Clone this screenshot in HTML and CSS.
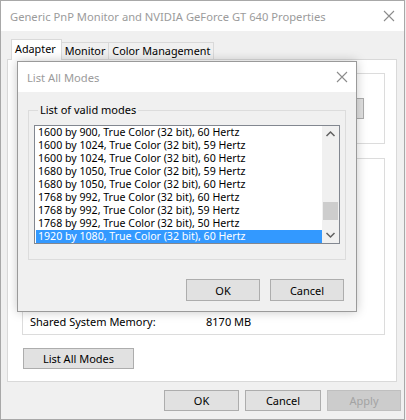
FILE: index.html
```html
<!DOCTYPE html>
<html>
<head>
<meta charset="utf-8">
<link rel="stylesheet" href="styles.css">
</head>
<body>
<div class="window">
  <div class="titlebar">
    <span class="title">Generic PnP Monitor and NVIDIA GeForce GT 640 Properties</span>
    <svg class="close" width="12" height="12" viewBox="0 0 12 12"><path d="M1 1L11 11M11 1L1 11" stroke="#8c8c8c" stroke-width="1.1" fill="none"/></svg>
  </div>
  <div class="body">
    <div class="tabs">
      <div class="tab active">Adapter</div>
      <div class="tab">Monitor</div>
      <div class="tab">Color Management</div>
    </div>
    <div class="panel">
      <div class="group g1">
        <div class="btn ghost">Properties</div>
      </div>
      <div class="group g2">
        <div class="info-row"><span class="lbl">Shared System Memory:</span><span class="val">8170 MB</span></div>
      </div>
      <div class="btn listbtn">List All Modes</div>
    </div>
    <div class="footer">
      <div class="btn">OK</div>
      <div class="btn">Cancel</div>
      <div class="btn disabled">Apply</div>
    </div>
  </div>

  <div class="dialog">
    <div class="d-title">
      <span class="title">List All Modes</span>
      <svg class="close" width="12" height="12" viewBox="0 0 12 12"><path d="M1 1L11 11M11 1L1 11" stroke="#8c8c8c" stroke-width="1.1" fill="none"/></svg>
    </div>
    <div class="d-body">
      <fieldset class="d-group">
        <legend>List of valid modes</legend>
        <div class="listbox">
          <div class="rows">
            <div class="row">1600 by 900, True Color (32 bit), 60 Hertz</div>
            <div class="row">1600 by 1024, True Color (32 bit), 59 Hertz</div>
            <div class="row">1600 by 1024, True Color (32 bit), 60 Hertz</div>
            <div class="row">1680 by 1050, True Color (32 bit), 59 Hertz</div>
            <div class="row">1680 by 1050, True Color (32 bit), 60 Hertz</div>
            <div class="row">1768 by 992, True Color (32 bit), 60 Hertz</div>
            <div class="row">1768 by 992, True Color (32 bit), 59 Hertz</div>
            <div class="row">1768 by 992, True Color (32 bit), 50 Hertz</div>
            <div class="row sel">1920 by 1080, True Color (32 bit), 60 Hertz</div>
          </div>
          <div class="scrollbar">
            <svg class="arrow" width="17" height="17" viewBox="0 0 17 17"><path d="M4.5 10L8.5 6L12.5 10" stroke="#606060" stroke-width="1.5" fill="none"/></svg>
            <div class="track"><div class="thumb"></div></div>
            <svg class="arrow" width="17" height="17" viewBox="0 0 17 17"><path d="M4.5 7L8.5 11L12.5 7" stroke="#606060" stroke-width="1.5" fill="none"/></svg>
          </div>
        </div>
      </fieldset>
      <div class="d-buttons">
        <div class="btn">OK</div>
        <div class="btn">Cancel</div>
      </div>
    </div>
  </div>
</div>
</body>
</html>
```

FILE: styles.css
```css
* { box-sizing: border-box; }
html, body { margin: 0; padding: 0; }
body {
  width: 406px;
  height: 420px;
  overflow: hidden;
  font-family: "Noto Sans", "DejaVu Sans", sans-serif;
  font-size: 11px;
  color: #000;
  background: #f0f0f0;
}
.window {
  position: relative;
  width: 405px;
  height: 420px;
  border: 1px solid #a8a8a8;
  background: #f0f0f0;
  display: flex;
  flex-direction: column;
}
.titlebar {
  height: 30px;
  background: #fff;
  display: flex;
  align-items: center;
  justify-content: space-between;
  padding: 0 9px 0 9px;
  flex: none;
}
.title {
  color: #9b9b9b;
  font-size: 11.2px;
}
.close { display: block; }
.body {
  flex: 1;
  display: flex;
  flex-direction: column;
  padding: 8px 7px 0 6px;
}
.tabs {
  display: flex;
  align-items: flex-end;
  height: 20px;
  padding-left: 4px;
  position: relative;
  z-index: 1;
}
.tab {
  height: 17px;
  padding: 0 3px 0 3px;
  line-height: 16px;
  font-size: 10.8px;
  border: 1px solid #d9d9d9;
  border-bottom: none;
  border-left: none;
  background: #f0f0f0;
}
.tab.active {
  height: 21px;
  margin-bottom: -1px;
  background: #fff;
  border-left: 1px solid #d9d9d9;
  padding: 0 5px 0 3px;
  line-height: 17px;
}
.panel {
  height: 323px;
  background: #fff;
  border: 1px solid #d9d9d9;
  padding: 13px 11px 0 14px;
  display: flex;
  flex-direction: column;
}
.group {
  border: 1px solid #dcdcdc;
  flex: none;
}
.g1 { height: 71px; display: flex; align-items: center; justify-content: flex-end; padding-right: 20px; }
.g2 { height: 177px; margin-top: 14px; display: flex; flex-direction: column; justify-content: flex-end; padding: 0 0 6px 7px; }
.info-row { display: flex; height: 14px; align-items: center; }
.lbl { width: 176px; }
.btn {
  height: 22px;
  border: 1px solid #adadad;
  background: #e1e1e1;
  display: flex;
  align-items: center;
  justify-content: center;
  flex: none;
}
.ghost { width: 80px; height: 21px; }
.listbtn { width: 111px; height: 21px; margin-top: 13px; margin-left: 1px; }
.footer {
  display: flex;
  justify-content: flex-end;
  gap: 6px;
  padding-top: 8px;
  margin-right: -4px;
}
.footer .btn { width: 75px; height: 21px; }
.footer .btn:nth-child(2) { width: 76px; }
.footer .disabled { width: 74px; color: #a3a3a3; background: #cccccc; border-color: #bfbfbf; }

/* dialog */
.dialog {
  position: absolute;
  left: 16px;
  top: 60px;
  width: 340px;
  height: 251px;
  border: 1px solid #9a9a9a;
  background: #f0f0f0;
  box-shadow: 0 0 10px rgba(0,0,0,0.22);
  display: flex;
  flex-direction: column;
  z-index: 5;
}
.d-title {
  height: 30px;
  background: #fff;
  display: flex;
  align-items: center;
  justify-content: space-between;
  padding: 0 8px 0 9px;
  flex: none;
}
.d-body {
  flex: 1;
  padding: 12px 10px 0 10px;
  display: flex;
  flex-direction: column;
}
.d-group {
  margin: 0;
  border: 1px solid #dcdcdc;
  padding: 9px 5px 15px 5px;
  height: 156px;
  min-width: 0;
}
.d-group legend {
  padding: 0 2px;
  margin-left: 4px;
  line-height: 12px;
}
.listbox {
  height: 119px;
  border: 1px solid #828790;
  background: #fff;
  display: flex;
  padding: 0 0 0 1px;
}
.rows { flex: 1; display: flex; flex-direction: column; }
.row {
  height: 13px;
  line-height: 13px;
  font-size: 10.6px;
  padding-left: 2px;
  white-space: nowrap;
  overflow: hidden;
}
.row.sel { background: #3399ff; color: #fff; }
.scrollbar {
  width: 17px;
  background: #f0f0f0;
  display: flex;
  flex-direction: column;
}
.arrow { display: block; flex: none; }
.track { flex: 1; position: relative; }
.thumb {
  position: absolute;
  left: 1px;
  right: 1px;
  top: 59px;
  height: 18px;
  background: #cdcdcd;
}
.d-buttons {
  display: flex;
  justify-content: flex-end;
  gap: 10px;
  padding-top: 19px;
  padding-right: 2px;
}
.d-buttons .btn { width: 74px; }
```
